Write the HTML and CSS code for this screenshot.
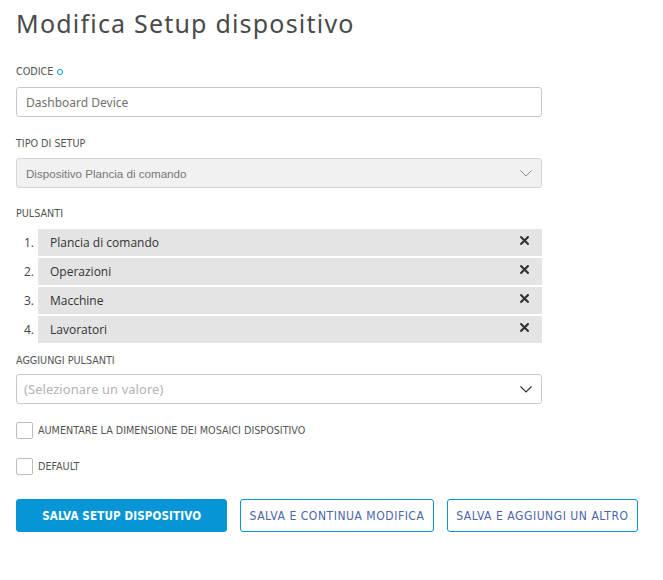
FILE: index.html
```html
<!DOCTYPE html>
<html lang="it">
<head>
<meta charset="utf-8">
<title>Modifica Setup dispositivo</title>
<link rel="stylesheet" href="styles.css">
</head>
<body>
<div class="page">
  <h1 class="title">Modifica Setup dispositivo</h1>

  <div class="field f-codice">
    <label class="label">CODICE <span class="req"></span></label>
    <div class="input">Dashboard Device</div>
  </div>

  <div class="field f-tipo">
    <label class="label">TIPO DI SETUP</label>
    <div class="select disabled">
      <span class="select-text">Dispositivo Plancia di comando</span>
      <svg class="chev" width="12" height="7" viewBox="0 0 12 7"><path d="M0.5 0.5 L6 6 L11.5 0.5" fill="none" stroke="#8a8a8a" stroke-width="1"/></svg>
    </div>
  </div>

  <div class="field f-pulsanti">
    <label class="label">PULSANTI</label>
    <ol class="list">
      <li class="row"><span class="num">1.</span><div class="item"><span>Plancia di comando</span><svg class="x" width="9" height="9" viewBox="0 0 9 9"><path d="M1.2 1.2 L7.8 7.8 M7.8 1.2 L1.2 7.8" stroke="#333" stroke-width="2.2" stroke-linecap="square"/></svg></div></li>
      <li class="row"><span class="num">2.</span><div class="item"><span>Operazioni</span><svg class="x" width="9" height="9" viewBox="0 0 9 9"><path d="M1.2 1.2 L7.8 7.8 M7.8 1.2 L1.2 7.8" stroke="#333" stroke-width="2.2" stroke-linecap="square"/></svg></div></li>
      <li class="row"><span class="num">3.</span><div class="item"><span>Macchine</span><svg class="x" width="9" height="9" viewBox="0 0 9 9"><path d="M1.2 1.2 L7.8 7.8 M7.8 1.2 L1.2 7.8" stroke="#333" stroke-width="2.2" stroke-linecap="square"/></svg></div></li>
      <li class="row"><span class="num">4.</span><div class="item"><span>Lavoratori</span><svg class="x" width="9" height="9" viewBox="0 0 9 9"><path d="M1.2 1.2 L7.8 7.8 M7.8 1.2 L1.2 7.8" stroke="#333" stroke-width="2.2" stroke-linecap="square"/></svg></div></li>
    </ol>
  </div>

  <div class="field f-aggiungi">
    <label class="label">AGGIUNGI PULSANTI</label>
    <div class="select">
      <span class="placeholder">(Selezionare un valore)</span>
      <svg class="chev" width="12" height="7" viewBox="0 0 12 7"><path d="M0.5 0.5 L6 6 L11.5 0.5" fill="none" stroke="#333" stroke-width="1.2"/></svg>
    </div>
  </div>

  <div class="check c1"><span class="box"></span><span class="check-label">AUMENTARE LA DIMENSIONE DEI MOSAICI DISPOSITIVO</span></div>
  <div class="check c2"><span class="box"></span><span class="check-label">DEFAULT</span></div>

  <div class="actions">
    <button class="btn primary b1">SALVA SETUP DISPOSITIVO</button>
    <button class="btn outline b2">SALVA E CONTINUA MODIFICA</button>
    <button class="btn outline b3">SALVA E AGGIUNGI UN ALTRO</button>
  </div>
</div>
</body>
</html>
```

FILE: styles.css
```css
html, body {
  margin: 0;
  padding: 0;
  background: #ffffff;
}

.page {
  padding: 7px 0 0 16px;
  width: 526px;
  font-family: "Noto Sans", "Open Sans", sans-serif;
  color: #444;
}

.title {
  margin: 0;
  font-family: "Noto Sans", sans-serif;
  font-weight: 400;
  font-size: 25px;
  line-height: 32px;
  letter-spacing: 1.2px;
  color: #4a4a4a;
}

.field {
  display: flex;
  flex-direction: column;
}

.f-codice { margin-top: 26px; }
.f-tipo { margin-top: 20px; }
.f-pulsanti { margin-top: 19px; }
.f-aggiungi { margin-top: 11px; }

.label {
  display: flex;
  align-items: center;
  gap: 4px;
  height: 14px;
  font-family: "Liberation Sans Narrow", "DejaVu Sans Condensed", "Liberation Sans", sans-serif;
  font-size: 10.7px;
  line-height: 14px;
  color: #555;
  margin-bottom: 8px;
}

.f-tipo .label { margin-bottom: 7px; }
.f-pulsanti .label { margin-bottom: 8px; }
.f-aggiungi .label { margin-bottom: 6px; }

.req {
  display: inline-block;
  width: 4px;
  height: 4px;
  border: 1.3px solid #0696d7;
  border-radius: 50%;
}

.input, .select {
  box-sizing: border-box;
  height: 30px;
  border: 1px solid #c9c9c9;
  border-radius: 3px;
  display: flex;
  align-items: center;
  padding: 0 9px;
  font-size: 12px;
  color: #707070;
}

.select {
  justify-content: space-between;
}

.select.disabled {
  background: #f1f1f1;
  border-color: #d4d4d4;
}

.select-text {
  font-family: "Liberation Sans", Arial, sans-serif;
  font-size: 11.6px;
  color: #777;
}

.placeholder {
  font-family: "Noto Sans", sans-serif;
  font-size: 12.9px;
  color: #b3b3b3;
  letter-spacing: 0.1px;
  margin-left: -2px;
}

.chev {
  display: block;
}

.list {
  list-style: none;
  margin: 0;
  padding: 0;
  display: flex;
  flex-direction: column;
  gap: 2px;
}

.row {
  display: flex;
  align-items: stretch;
  gap: 4px;
  height: 27px;
}

.num {
  width: 18px;
  text-align: right;
  font-family: "Open Sans", sans-serif;
  font-size: 12px;
  line-height: 27px;
  color: #444;
}

.item {
  flex: 1;
  background: #e4e4e4;
  display: flex;
  align-items: center;
  justify-content: space-between;
  padding: 0 13px 0 12px;
  font-family: "Open Sans", sans-serif;
  font-size: 12px;
  color: #333;
}

.x {
  display: block;
  margin-top: -5px;
}

.check {
  display: flex;
  align-items: center;
  gap: 5px;
}

.c1 { margin-top: 18px; }
.c2 { margin-top: 19px; }

.box {
  box-sizing: border-box;
  width: 17px;
  height: 17px;
  border: 1px solid #bdbdbd;
  border-radius: 2px;
  background: #fff;
}

.check-label {
  font-family: "Liberation Sans Narrow", "DejaVu Sans Condensed", "Liberation Sans", sans-serif;
  font-size: 10.7px;
  color: #555;
}

.actions {
  display: flex;
  gap: 13px;
  margin-top: 24px;
  width: 622px;
}

.btn {
  box-sizing: border-box;
  height: 33px;
  border-radius: 3px;
  font-family: "Liberation Sans Narrow", "DejaVu Sans Condensed", "Liberation Sans", sans-serif;
  font-size: 12px;
  letter-spacing: 0.55px;
  padding: 0;
  cursor: pointer;
}

.primary {
  background: #0696d7;
  border: 1px solid #0696d7;
  color: #fff;
  font-weight: 700;
  font-size: 11.5px;
  letter-spacing: 0.15px;
}

.outline {
  background: #fff;
  border: 1px solid #0696d7;
  color: #4a66a6;
}

.b1 { width: 212px; }
.b2 { width: 194px; }
.b3 { width: 192px; }
```
